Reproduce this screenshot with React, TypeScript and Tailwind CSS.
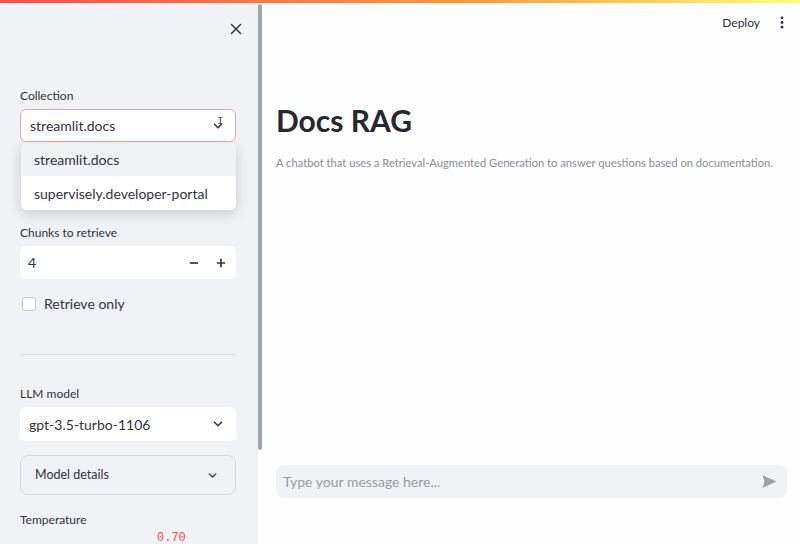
import * as React from 'react';

const font = { fontFamily: 'Lato, "Noto Sans", sans-serif' };

const Chevron: React.FC<{ className?: string }> = ({ className }) => (
	<svg viewBox="0 0 24 24" className={className} fill="none" stroke="currentColor" strokeWidth={2.6} strokeLinecap="round" strokeLinejoin="round">
		<path d="M6 9l6 6 6-6" />
	</svg>
);

const Label: React.FC<{ children: React.ReactNode }> = ({ children }) => (
	<div className="text-[12px] leading-none text-[#31333f]">{children}</div>
);

const Sidebar: React.FC = () => {
	return (
		<aside className="relative flex h-full w-[258px] shrink-0 flex-col bg-[#f0f2f6] pr-[22px] pl-5 text-[#31333f]">
			<div className="flex h-[46px] items-end justify-end pb-[8px]">
				<svg viewBox="0 0 24 24" className="mr-[-9px] h-[18px] w-[18px] text-[#31333f]" fill="none" stroke="currentColor" strokeWidth={2} strokeLinecap="round">
					<path d="M6 6l12 12M18 6L6 18" />
				</svg>
			</div>

			<div className="mt-[44px]">
				<Label>Collection</Label>
				<div className="relative mt-[7px]">
					<div className="flex h-[33px] items-center justify-between rounded-md border border-[#f3a3a8] bg-white pr-[10px] pl-[9px]">
						<span className="text-[14px] text-[#31333f]">streamlit.docs</span>
						<span className="relative flex items-center">
							<Chevron className="h-[14px] w-[14px] text-[#31333f]" />
							<span className="absolute left-[6px] top-[-3px] font-mono text-[11px] leading-none text-[#555]">I</span>
						</span>
					</div>
					<div className="absolute top-[34px] left-[1px] right-0 z-10 overflow-hidden rounded-md bg-white shadow-[0_4px_14px_rgba(0,0,0,0.16)]">
						<div className="flex h-[33px] items-center bg-[#f0f2f6] pl-[13px] text-[14px]">streamlit.docs</div>
						<div className="flex h-[34px] items-center pl-[13px] text-[14px]">supervisely.developer-portal</div>
					</div>
				</div>
			</div>

			<div className="mt-[85px]">
				<Label>Chunks to retrieve</Label>
				<div className="mt-[7px] flex h-[33px] items-center justify-between rounded-md bg-white pr-[10px] pl-[8px]">
					<span className="text-[14px]">4</span>
					<div className="flex items-center gap-[17px] text-[#31333f]">
						<svg viewBox="0 0 12 12" className="h-[10px] w-[10px]" stroke="currentColor" strokeWidth={2}>
							<path d="M1 6h10" />
						</svg>
						<svg viewBox="0 0 12 12" className="h-[10px] w-[10px]" stroke="currentColor" strokeWidth={2}>
							<path d="M1 6h10M6 1v10" />
						</svg>
					</div>
				</div>
			</div>

			<div className="mt-[14px] flex items-center gap-[8px] pl-[2px]">
				<div className="h-[14px] w-[14px] rounded-[3px] border border-[#c7c9d0] bg-white" />
				<span className="text-[14px]">Retrieve only</span>
			</div>

			<div className="mt-[40px] h-px bg-[#dcdee3]" />

			<div className="mt-[33px]">
				<Label>LLM model</Label>
				<div className="mt-[7px] flex h-[34px] items-center justify-between rounded-md bg-white pr-[11px] pl-[9px]">
					<span className="text-[14px]">gpt-3.5-turbo-1106</span>
					<Chevron className="h-[14px] w-[14px]" />
				</div>
			</div>

			<div className="mt-[14px] flex h-[40px] items-center justify-between rounded-lg border border-[#d6d8de] pr-[16px] pl-[14px]">
				<span className="text-[12.5px]">Model details</span>
				<Chevron className="h-[13px] w-[13px]" />
			</div>

			<div className="mt-[19px]">
				<Label>Temperature</Label>
				<div className="mt-[6px] pl-[137px] text-[12px] leading-none text-[#ff4b4b]" style={{ fontFamily: '"Liberation Mono", monospace' }}>
					0.70
				</div>
			</div>
		</aside>
	);
};

const App: React.FC = () => {
	return (
		<div className="relative flex h-[544px] w-[800px] overflow-hidden bg-[#fdfdfe]" style={font}>
			<div className="absolute top-0 right-0 left-0 z-20 h-[3px] bg-[linear-gradient(90deg,#ff4b4b,#ff9a3c_60%,#fffd80)]" />
			<Sidebar />
			<div className="mt-[4px] h-[446px] w-[4px] shrink-0 rounded-sm bg-[#a3a5ad]" />
			<main className="flex flex-1 flex-col pr-[13px] pl-[14px]">
				<div className="flex h-[44px] items-center justify-end gap-[20px] pt-[1px]">
					<span className="text-[12px] text-[#31333f]">Deploy</span>
					<svg viewBox="0 0 4 14" className="mr-[3px] h-[13px] w-[4px] text-[#31333f]" fill="currentColor">
						<circle cx="2" cy="2" r="1.5" />
						<circle cx="2" cy="7" r="1.5" />
						<circle cx="2" cy="12" r="1.5" />
					</svg>
				</div>
				<h1 className="mt-[56px] text-[30px] leading-[40px] font-bold text-[#262730]">Docs RAG</h1>
				<p className="mt-[15px] text-[11.2px] text-[#8c8e96]">
					A chatbot that uses a Retrieval-Augmented Generation to answer questions based on documentation.
				</p>
				<div className="mt-auto mb-[46px] flex h-[33px] items-center justify-between rounded-lg bg-[#f0f2f6] pr-[9px] pl-[7px]">
					<span className="text-[14px] text-[#9a9ca4]">Type your message here...</span>
					<svg viewBox="0 0 24 24" className="h-[17px] w-[17px] text-[#9ea0a8]" fill="currentColor">
						<path d="M2 3l20 9-20 9 3-9-3-9z" />
					</svg>
				</div>
			</main>
		</div>
	);
};

export default App;
